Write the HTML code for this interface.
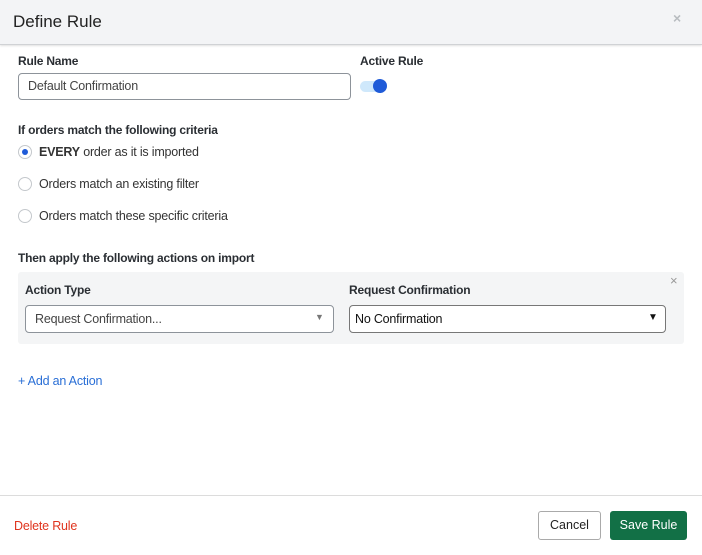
<!DOCTYPE html>
<html><head><style>
*{box-sizing:border-box;margin:0;padding:0}
body{width:702px;height:555px;background:#fff;font-family:"Liberation Sans",Arial,sans-serif;color:#222;position:relative;overflow:hidden;font-size:12px}
.a{position:absolute;white-space:nowrap}
.hdr{left:0;top:0;width:702px;height:45px;background:#f3f4f6;border-bottom:1px solid #d0d2d5;box-shadow:0 1px 2px rgba(0,0,0,.12)}
.lbl{font-weight:bold;font-size:12px;color:#2a2e33;letter-spacing:-.2px}
.inp{border:1px solid #8d939a;border-radius:4px;background:#fff}
.rad{width:14px;height:14px;border:1px solid #c4c8cc;border-radius:50%;background:#fff}
.rt{font-size:12.5px;color:#333;letter-spacing:-.2px}
</style></head><body>
<div class="a hdr"></div>
<div class="a" style="left:13px;top:12px;font-size:17px;color:#222">Define Rule</div>
<div class="a" style="left:673px;top:10px;font-size:14px;color:#b8bcc0;font-weight:bold">×</div>

<div class="a lbl" style="left:18px;top:54px">Rule Name</div>
<div class="a inp" style="left:18px;top:73px;width:333px;height:27px"></div>
<div class="a rt" style="left:28px;top:79px;color:#444">Default Confirmation</div>
<div class="a lbl" style="left:360px;top:54px">Active Rule</div>
<div class="a" style="left:360px;top:81px;width:26px;height:11px;border-radius:6px;background:#cfe8fb"></div>
<div class="a" style="left:373px;top:79px;width:14px;height:14px;border-radius:50%;background:#1f5bd8"></div>

<div class="a lbl" style="left:18px;top:123px">If orders match the following criteria</div>
<div class="a rad" style="left:18px;top:145px"></div>
<div class="a" style="left:22px;top:149px;width:6px;height:6px;border-radius:50%;background:#1f5bd8"></div>
<div class="a rt" style="left:39px;top:145px"><b>EVERY</b> order as it is imported</div>
<div class="a rad" style="left:18px;top:177px"></div>
<div class="a rt" style="left:39px;top:177px">Orders match an existing filter</div>
<div class="a rad" style="left:18px;top:209px"></div>
<div class="a rt" style="left:39px;top:209px">Orders match these specific criteria</div>

<div class="a lbl" style="left:18px;top:251px">Then apply the following actions on import</div>
<div class="a" style="left:18px;top:272px;width:666px;height:72px;background:#f4f5f6;border-radius:3px"></div>
<div class="a" style="left:670px;top:273px;font-size:13px;color:#999">×</div>
<div class="a lbl" style="left:25px;top:283px">Action Type</div>
<div class="a lbl" style="left:349px;top:283px">Request Confirmation</div>
<div class="a inp" style="left:25px;top:305px;width:309px;height:28px"></div>
<div class="a rt" style="left:35px;top:312px;color:#444">Request Confirmation...</div>
<div class="a" style="left:315px;top:312px;font-size:9px;color:#777">▼</div>
<div class="a inp" style="left:349px;top:305px;width:317px;height:28px;border-color:#777"></div>
<div class="a rt" style="left:355px;top:312px;color:#111">No Confirmation</div>
<div class="a" style="left:648px;top:312px;font-size:10px;color:#111">▼</div>

<div class="a rt" style="left:18px;top:374px;color:#2a6fd6">+ Add an Action</div>

<div class="a" style="left:0;top:495px;width:702px;height:1px;background:#dcdcdc"></div>
<div class="a rt" style="left:14px;top:519px;color:#e0341e">Delete Rule</div>
<div class="a" style="left:538px;top:511px;width:63px;height:29px;border:1px solid #aaa;border-radius:3px;background:#fff;text-align:center;line-height:27px;font-size:12.5px;color:#222">Cancel</div>
<div class="a" style="left:610px;top:511px;width:77px;height:29px;border-radius:3px;background:#127046;text-align:center;line-height:29px;font-size:12.5px;color:#fff">Save Rule</div>
</body></html>
